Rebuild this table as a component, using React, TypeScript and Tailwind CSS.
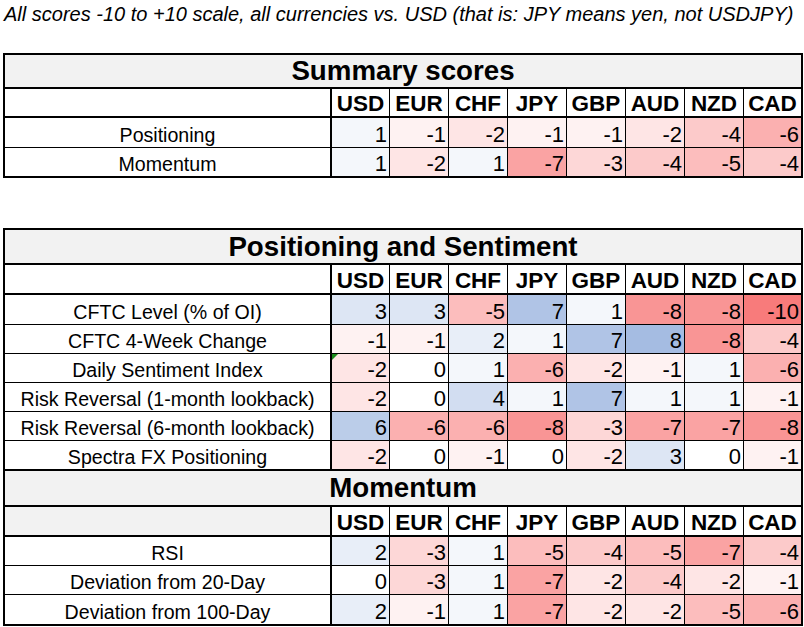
import React from "react";

type RowData = { label: string; values: number[]; flag?: boolean };

const CURRENCIES = ["USD", "EUR", "CHF", "JPY", "GBP", "AUD", "NZD", "CAD"];

const summaryRows: RowData[] = [
  { label: "Positioning", values: [1, -1, -2, -1, -1, -2, -4, -6] },
  { label: "Momentum", values: [1, -2, 1, -7, -3, -4, -5, -4] },
];

const positioningRows: RowData[] = [
  { label: "CFTC Level (% of OI)", values: [3, 3, -5, 7, 1, -8, -8, -10] },
  { label: "CFTC 4-Week Change", values: [-1, -1, 2, 1, 7, 8, -8, -4] },
  { label: "Daily Sentiment Index", values: [-2, 0, 1, -6, -2, -1, 1, -6], flag: true },
  { label: "Risk Reversal (1-month lookback)", values: [-2, 0, 4, 1, 7, 1, 1, -1] },
  { label: "Risk Reversal (6-month lookback)", values: [6, -6, -6, -8, -3, -7, -7, -8] },
  { label: "Spectra FX Positioning", values: [-2, 0, -1, 0, -2, 3, 0, -1] },
];

const momentumRows: RowData[] = [
  { label: "RSI", values: [2, -3, 1, -5, -4, -5, -7, -4] },
  { label: "Deviation from 20-Day", values: [0, -3, 1, -7, -2, -4, -2, -1] },
  { label: "Deviation from 100-Day", values: [2, -1, 1, -7, -2, -2, -5, -6] },
];

function cellColor(v: number): string {
  if (v === 0) return "#ffffff";
  if (v > 0) {
    const r = Math.round(255 - 11.3 * v);
    const g = Math.round(255 - 8.4 * v);
    const b = Math.round(255 - 3.6 * v);
    return `rgb(${r},${g},${b})`;
  }
  const a = -v;
  const r = Math.round(255 - 0.7 * a);
  const g = Math.round(255 - 13.2 * a);
  return `rgb(${r},${g},${g})`;
}

function TitleRow({ text, h }: { text: string; h: string }) {
  return (
    <div className={`${h} border-b-2 border-black bg-[#f2f2f2] flex items-center justify-center`}>
      <span className="text-[27.7px] leading-none font-bold">{text}</span>
    </div>
  );
}

function HeaderRow({ gray, h }: { gray?: boolean; h: string }) {
  return (
    <div className={`grid grid-cols-[327px_58px_repeat(6,59px)_57px] ${h} border-b-2 border-black`}>
      <div className={`border-r-2 border-black ${gray ? "bg-[#f2f2f2]" : "bg-white"}`} />
      {CURRENCIES.map((c, i) => (
        <div
          key={c}
          className={`flex items-end justify-center bg-white text-[22.5px] leading-none font-bold pb-[1px] ${
            i < 7 ? "border-r border-black" : ""
          }`}
        >
          {c}
        </div>
      ))}
    </div>
  );
}

function DataRow({ row, h, border }: { row: RowData; h: string; border: string }) {
  return (
    <div className={`grid grid-cols-[327px_58px_repeat(6,59px)_57px] ${h} ${border} border-black`}>
      <div className="flex items-end justify-center border-r-2 border-black bg-white text-[19.6px] leading-[1.15]">
        {row.label}
      </div>
      {row.values.map((v, i) => (
        <div
          key={i}
          className={`relative flex items-end justify-end pr-[2px] text-[22px] leading-[1.15] ${
            i < 7 ? "border-r border-black" : ""
          }`}
          style={{ backgroundColor: cellColor(v) }}
        >
          {row.flag && i === 0 && (
            <svg className="absolute left-0 top-0" width="6" height="6" viewBox="0 0 6 6">
              <polygon points="0,0 6,0 0,6" fill="#1a8a1a" />
            </svg>
          )}
          {v}
        </div>
      ))}
    </div>
  );
}

export default function App() {
  return (
    <div
      className="w-[804px] h-[627px] bg-white text-black overflow-hidden"
      style={{ fontFamily: '"Liberation Sans", Arial, sans-serif' }}
    >
      <div className="pt-[3px] pl-[4px] text-[20px] leading-[1.15] italic whitespace-nowrap">
        All scores -10 to +10 scale, all currencies vs. USD (that is: JPY means yen, not USDJPY)
      </div>

      <div className="ml-[3px] mt-[27px] w-[800px] border-2 border-black">
        <TitleRow text="Summary scores" h="h-[34px]" />
        <HeaderRow h="h-[29px]" />
        <DataRow row={summaryRows[0]} h="h-[30px]" border="border-b" />
        <DataRow row={summaryRows[1]} h="h-[28px]" border="" />
      </div>

      <div className="ml-[3px] mt-[50px] w-[800px] border-2 border-black">
        <TitleRow text="Positioning and Sentiment" h="h-[35px]" />
        <HeaderRow h="h-[30px]" />
        {positioningRows.map((r, i) => (
          <DataRow
            key={r.label}
            row={r}
            h={i === 0 ? "h-[30px]" : i === 5 ? "h-[30px]" : "h-[29px]"}
            border={i === 5 ? "border-b-2" : "border-b"}
          />
        ))}
        <TitleRow text="Momentum" h="h-[36px]" />
        <HeaderRow gray h="h-[30px]" />
        {momentumRows.map((r, i) => (
          <DataRow key={r.label} row={r} h="h-[29px]" border={i < 2 ? "border-b" : ""} />
        ))}
      </div>
    </div>
  );
}
